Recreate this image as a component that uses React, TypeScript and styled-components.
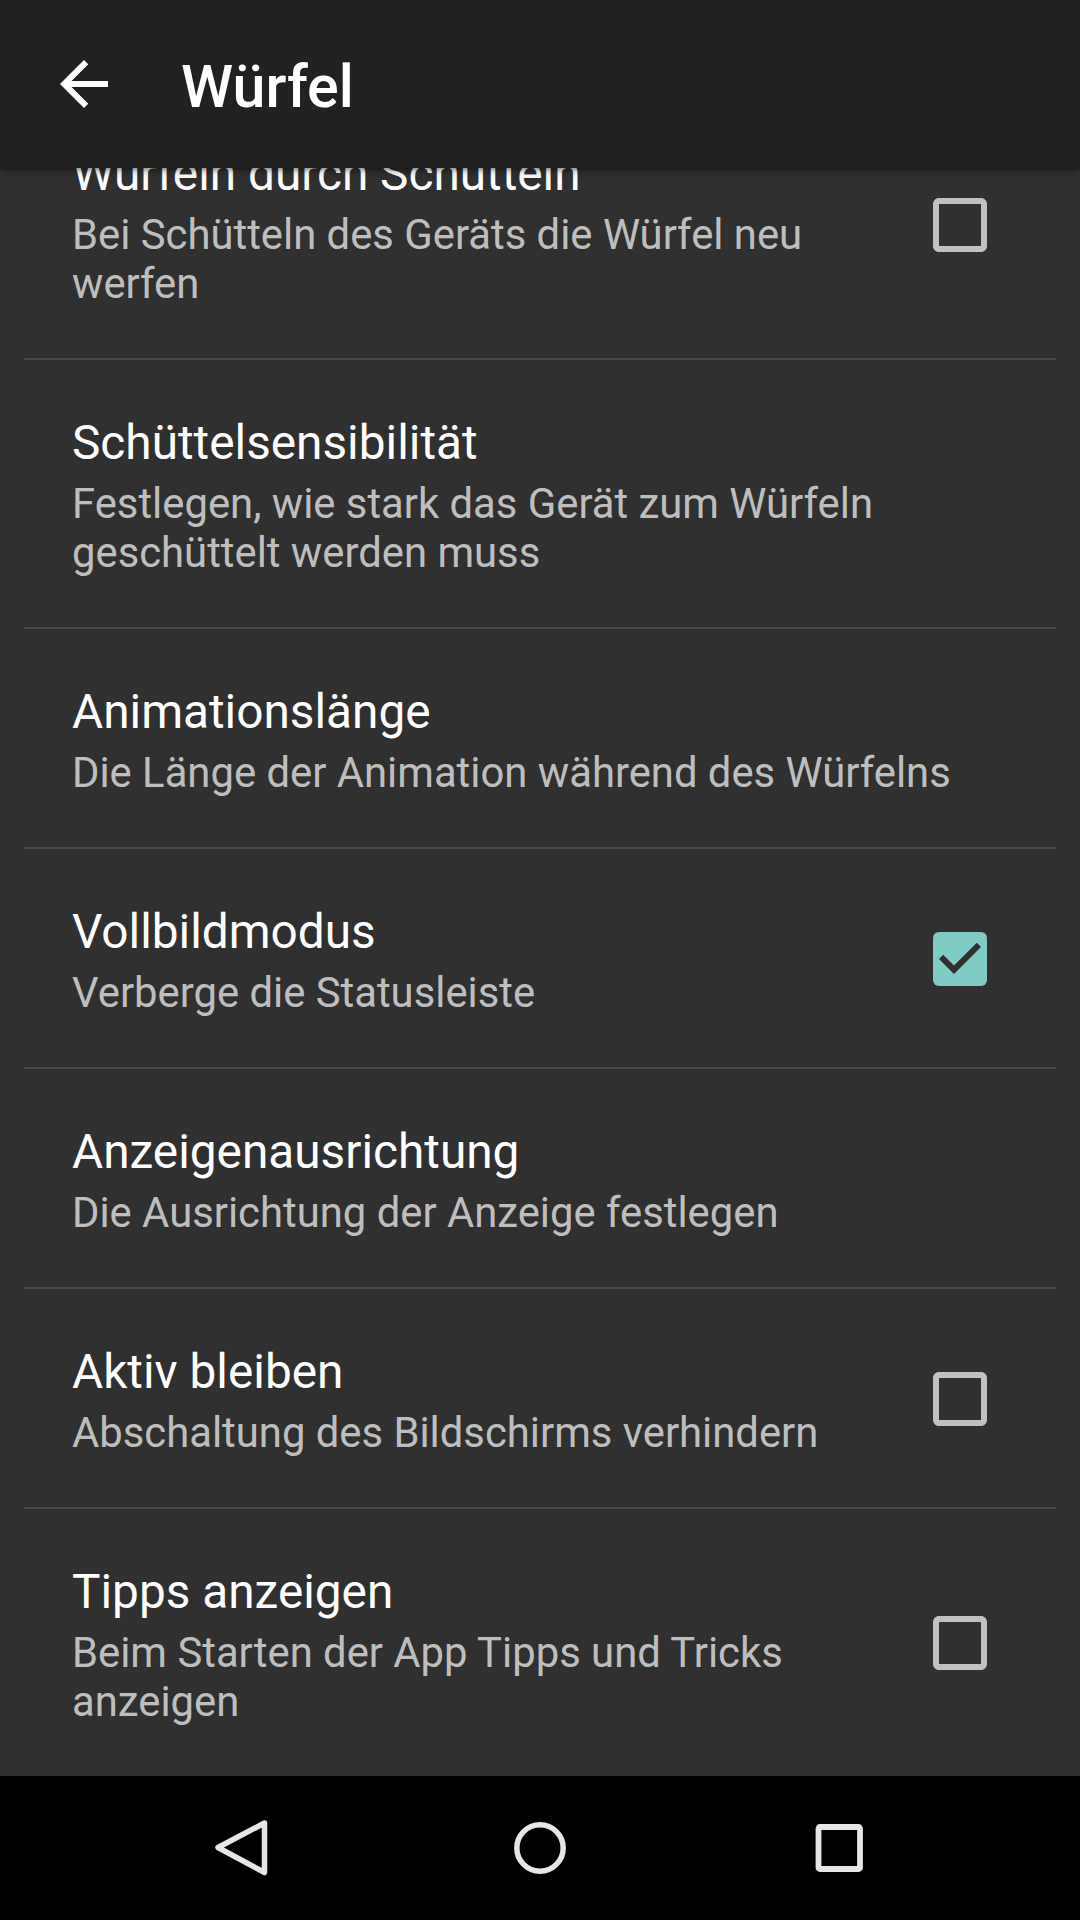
import React from "react";
import styled, { createGlobalStyle } from "styled-components";

const GlobalStyle = createGlobalStyle`
  html, body {
    margin: 0;
    padding: 0;
    background: #303030;
  }
  body {
    font-family: Roboto, "Noto Sans", "Liberation Sans", sans-serif;
    -webkit-font-smoothing: antialiased;
  }
  * { box-sizing: border-box; }
`;

const Screen = styled.div`
  position: relative;
  width: 1080px;
  height: 1920px;
  overflow: hidden;
  display: flex;
  flex-direction: column;
  background: #303030;
`;

const AppBar = styled.header`
  position: absolute;
  top: 0;
  left: 0;
  right: 0;
  height: 168px;
  z-index: 2;
  display: flex;
  align-items: center;
  background: #212121;
  box-shadow: 0 2px 4px rgba(0, 0, 0, 0.35), 0 4px 10px rgba(0, 0, 0, 0.2);
`;

const NavIconButton = styled.div`
  width: 72px;
  height: 72px;
  margin-left: 48px;
  display: flex;
  align-items: center;
  justify-content: center;
`;

const Title = styled.h1`
  margin: 0 0 0 61px;
  padding-top: 5px;
  font-size: 59.2px;
  line-height: 60px;
  font-weight: 500;
  color: #ffffff;
`;

const Content = styled.main`
  flex: 1;
  overflow: hidden;
  padding-top: 91px;
`;

const PrefList = styled.ul`
  list-style: none;
  margin: 0;
  padding: 0;
`;

const PrefRow = styled.li<{ $hasWidget: boolean }>`
  margin: 0 24px;
  display: flex;
  align-items: center;
  padding: 51px ${(p) => (p.$hasWidget ? 0 : 48)}px 50px 48px;
  border-bottom: 2px solid #494949;

  &:last-child {
    border-bottom-color: transparent;
  }
`;

const PrefText = styled.div`
  flex: 1;
  min-width: 0;
`;

const PrefTitle = styled.div`
  font-size: 47.75px;
  line-height: 64px;
  font-weight: 400;
  color: #ffffff;
`;

const PrefSummary = styled.div`
  margin-top: 4px;
  font-size: 41.8px;
  line-height: 49px;
  font-weight: 400;
  color: rgba(255, 255, 255, 0.7);
`;

const CheckboxFrame = styled.div`
  width: 72px;
  height: 72px;
  margin: 0 60px 0 19px;
  flex-shrink: 0;
`;

const NavBar = styled.nav`
  height: 144px;
  flex-shrink: 0;
  background: #000000;
  display: flex;
  align-items: center;
  justify-content: center;
  gap: 227px;
`;

const SysButton = styled.div`
  width: 72px;
  height: 72px;
  display: flex;
  align-items: center;
  justify-content: center;
`;

const BackArrow = () => (
  <svg width="72" height="72" viewBox="0 0 24 24">
    <path
      fill="#ffffff"
      d="M20 11H7.83l5.59-5.59L12 4l-8 8 8 8 1.41-1.41L7.83 13H20v-2z"
    />
  </svg>
);

const Checkbox = ({ checked }: { checked: boolean }) => (
  <svg width="72" height="72" viewBox="0 0 24 24">
    {checked ? (
      <>
        <rect x="3" y="3" width="18" height="18" rx="2" fill="#80cbc4" />
        <path
          fill="#303030"
          d="M10 17l-5-5 1.41-1.41L10 14.17l7.59-7.59L19 8l-9 9z"
        />
      </>
    ) : (
      <path
        fill="rgba(255,255,255,0.7)"
        d="M19 5v14H5V5h14m0-2H5c-1.1 0-2 .9-2 2v14c0 1.1.9 2 2 2h14c1.1 0 2-.9 2-2V5c0-1.1-.9-2-2-2z"
      />
    )}
  </svg>
);

const SysBack = () => (
  <svg width="72" height="72" viewBox="0 0 72 72">
    <path
      d="M59.5 11 L13 35.5 L59.5 60.5 Z"
      fill="none"
      stroke="#e6e6e6"
      strokeWidth="5.5"
      strokeLinejoin="round"
    />
  </svg>
);

const SysHome = () => (
  <svg width="72" height="72" viewBox="0 0 72 72">
    <circle cx="36" cy="36" r="23.2" fill="none" stroke="#e6e6e6" strokeWidth="5.5" />
  </svg>
);

const SysRecent = () => (
  <svg width="72" height="72" viewBox="0 0 72 72">
    <rect
      x="15.5"
      y="15"
      width="41.5"
      height="42"
      rx="1.5"
      fill="none"
      stroke="#e6e6e6"
      strokeWidth="5.8"
    />
  </svg>
);

type Pref = {
  title: string;
  summary: string;
  checkbox?: boolean;
};

const prefs: Pref[] = [
  {
    title: "Würfeln durch Schütteln",
    summary: "Bei Schütteln des Geräts die Würfel neu werfen",
    checkbox: false,
  },
  {
    title: "Schüttelsensibilität",
    summary: "Festlegen, wie stark das Gerät zum Würfeln geschüttelt werden muss",
  },
  {
    title: "Animationslänge",
    summary: "Die Länge der Animation während des Würfelns",
  },
  {
    title: "Vollbildmodus",
    summary: "Verberge die Statusleiste",
    checkbox: true,
  },
  {
    title: "Anzeigenausrichtung",
    summary: "Die Ausrichtung der Anzeige festlegen",
  },
  {
    title: "Aktiv bleiben",
    summary: "Abschaltung des Bildschirms verhindern",
    checkbox: false,
  },
  {
    title: "Tipps anzeigen",
    summary: "Beim Starten der App Tipps und Tricks anzeigen",
    checkbox: false,
  },
];

export default function App() {
  return (
    <>
      <GlobalStyle />
      <Screen>
        <AppBar>
          <NavIconButton>
            <BackArrow />
          </NavIconButton>
          <Title>Würfel</Title>
        </AppBar>
        <Content>
          <PrefList>
            {prefs.map((p) => {
              const hasWidget = p.checkbox !== undefined;
              return (
                <PrefRow key={p.title} $hasWidget={hasWidget}>
                  <PrefText>
                    <PrefTitle>{p.title}</PrefTitle>
                    <PrefSummary>{p.summary}</PrefSummary>
                  </PrefText>
                  {hasWidget && (
                    <CheckboxFrame>
                      <Checkbox checked={!!p.checkbox} />
                    </CheckboxFrame>
                  )}
                </PrefRow>
              );
            })}
          </PrefList>
        </Content>
        <NavBar>
          <SysButton>
            <SysBack />
          </SysButton>
          <SysButton>
            <SysHome />
          </SysButton>
          <SysButton>
            <SysRecent />
          </SysButton>
        </NavBar>
      </Screen>
    </>
  );
}
